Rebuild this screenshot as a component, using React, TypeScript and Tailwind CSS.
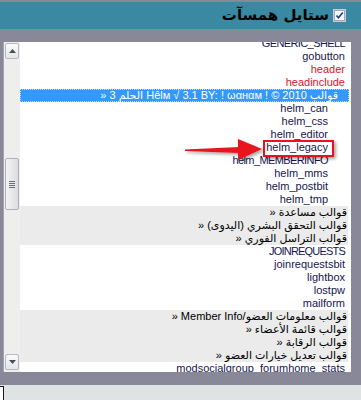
import React from "react";

type Row =
  | { kind: "opt"; text: string; color?: string; pr?: string; track?: string }
  | { kind: "sel" }
  | { kind: "grp"; ar: string; en?: string };

const rows: Row[] = [
  { kind: "opt", text: "GENERIC_SHELL", track: "tracking-[-0.6px]" },
  { kind: "opt", text: "gobutton" },
  { kind: "opt", text: "header", color: "text-[#e0102c]" },
  { kind: "opt", text: "headinclude", color: "text-[#e0102c]" },
  { kind: "sel" },
  { kind: "opt", text: "helm_can", pr: "pr-[23px]" },
  { kind: "opt", text: "helm_css", pr: "pr-[23px]" },
  { kind: "opt", text: "helm_editor", pr: "pr-[23px]" },
  { kind: "opt", text: "helm_legacy", pr: "pr-[23px]" },
  { kind: "opt", text: "helm_MEMBERINFO", pr: "pr-[23px]", track: "tracking-[-0.6px]" },
  { kind: "opt", text: "helm_mms", pr: "pr-[23px]" },
  { kind: "opt", text: "helm_postbit", pr: "pr-[23px]" },
  { kind: "opt", text: "helm_tmp", pr: "pr-[23px]" },
  { kind: "grp", ar: "قوالب مساعدة" },
  { kind: "grp", ar: "قوالب التحقق البشري (اليدوى)" },
  { kind: "grp", ar: "قوالب التراسل الفوري" },
  { kind: "opt", text: "JOINREQUESTS", track: "tracking-[-0.8px]" },
  { kind: "opt", text: "joinrequestsbit" },
  { kind: "opt", text: "lightbox" },
  { kind: "opt", text: "lostpw" },
  { kind: "opt", text: "mailform" },
  { kind: "grp", ar: "قوالب معلومات العضو", en: "Member Info/" },
  { kind: "grp", ar: "قوالب قائمة الأعضاء" },
  { kind: "grp", ar: "قوالب الرقابة" },
  { kind: "grp", ar: "قوالب تعديل خيارات العضو" },
  { kind: "opt", text: "modsocialgroup_forumhome_stats" },
];

function ScrollBtn({ down }: { down?: boolean }) {
  return (
    <div className="mx-[1px] h-[16px] rounded-[2px] border border-[#b8b8c4] bg-gradient-to-b from-[#fbfbfb] to-[#e6e6ea] flex items-center justify-center">
      <svg width="7" height="4" viewBox="0 0 7 4">
        {down ? (
          <polygon points="0,0 7,0 3.5,4" fill="#4d4d55" />
        ) : (
          <polygon points="0,4 7,4 3.5,0" fill="#4d4d55" />
        )}
      </svg>
    </div>
  );
}

function Raquo() {
  return <span className="inline-block">{"\u00BB"}</span>;
}

export default function App() {
  return (
    <div
      className="relative w-[361px] h-[400px] overflow-hidden bg-[#888898]"
      style={{ fontFamily: '"Liberation Sans", "DejaVu Sans", sans-serif' }}
    >
      {/* title bar */}
      <div className="mt-[2px] h-[27px] bg-[#3889a1] flex items-center justify-end pr-[15px] gap-[4px]">
        <span
          dir="rtl"
          className="text-[15px] font-bold text-black leading-none"
          style={{ fontFamily: '"DejaVu Sans", sans-serif' }}
        >
          ستايل همسآت
        </span>
        <svg width="13" height="13" viewBox="0 0 13 13">
          <rect x="0.5" y="0.5" width="12" height="12" fill="#eef0f6" stroke="#c8ccd8" />
          <rect x="1.5" y="1.5" width="10" height="10" fill="#f6f7fb" stroke="#9fa6c0" />
          <path d="M3.5 6.5 L5.5 8.8 L9.8 3.5" fill="none" stroke="#2a3c9a" strokeWidth="1.7" />
        </svg>
      </div>

      {/* list box */}
      <div className="mt-[13px] ml-[3px] w-[348px] h-[330px] bg-white flex">
        <div className="w-[17px] h-full bg-[#eeeeec] border-l border-[#a4a4b0] flex flex-col pt-[1px] pb-[2px]">
          <ScrollBtn />
          <div className="h-[99px]" />
          <div className="mx-[1px] h-[52px] rounded-[2px] border border-[#b0b0bc] bg-gradient-to-r from-[#f4f4f4] to-[#dcdce2] flex flex-col items-center justify-center gap-[1px]">
            <div className="w-[6px] h-[1px] bg-[#6e6e78]" />
            <div className="w-[6px] h-[1px] bg-[#6e6e78]" />
            <div className="w-[6px] h-[1px] bg-[#6e6e78]" />
            <div className="w-[6px] h-[1px] bg-[#6e6e78]" />
          </div>
          <div className="flex-1" />
          <ScrollBtn down />
        </div>
        <div className="flex-1 overflow-hidden">
          <div className="-mt-[5px] text-[11px]">
            {rows.map((r, i) => {
              if (r.kind === "opt") {
                return (
                  <div
                    key={i}
                    className={`h-[13px] leading-[13px] text-right whitespace-nowrap ${r.pr ?? "pr-[6px]"} ${r.color ?? "text-[#16164e]"} ${r.track ?? ""}`}
                  >
                    {r.text}
                  </div>
                );
              }
              if (r.kind === "sel") {
                return (
                  <div
                    key={i}
                    className="mr-[2px] h-[13px] leading-[11px] bg-[#3399ff] border border-dotted border-[#bcdcff] text-white text-right pr-[10px] whitespace-nowrap"
                  >
                    <span dir="ltr">
                      <Raquo />
                      {" 3 "}
                      <bdi dir="rtl">الحلم</bdi>
                      {" Hêĺм √ 3.1 BY: ! ωαнαм ! © 2010 "}
                      <bdi dir="rtl">قوالب</bdi>
                    </span>
                  </div>
                );
              }
              return (
                <div
                  key={i}
                  className="mr-[3px] h-[13px] leading-[13px] bg-[#ebebeb] text-black text-right pr-[1px] whitespace-nowrap"
                >
                  <span dir="ltr">
                    <Raquo />
                    {" "}
                    {r.en ?? ""}
                    <bdi dir="rtl">{r.ar}</bdi>
                  </span>
                </div>
              );
            })}
          </div>
        </div>
      </div>

      {/* bottom */}
      <div className="mt-[13px] h-[15px] bg-[#dfe3e3] relative">
        <div className="absolute left-[-2px] top-[1px] w-[6px] h-[16px] bg-white border border-[#1a1a1a]" />
      </div>

      {/* annotation: red box */}
      <div className="absolute left-[263px] top-[140px] w-[71px] h-[17px] border-2 border-[#e8121c] shadow-[2px_2px_3px_rgba(0,0,0,0.35)]" />
      {/* annotation: arrow */}
      <svg
        className="absolute left-[180px] top-[136px]"
        width="86"
        height="28"
        viewBox="0 0 86 28"
      >
        <defs>
          <filter id="sh" x="-20%" y="-50%" width="150%" height="200%">
            <feDropShadow dx="2" dy="2" stdDeviation="1.5" floodColor="#000" floodOpacity="0.35" />
          </filter>
        </defs>
        <g filter="url(#sh)">
          <polygon points="5,13.5 60,11 60,17 5,15" fill="#e8121c" />
          <polygon points="58,3 82,13 58,24" fill="#e8121c" />
        </g>
      </svg>
    </div>
  );
}
